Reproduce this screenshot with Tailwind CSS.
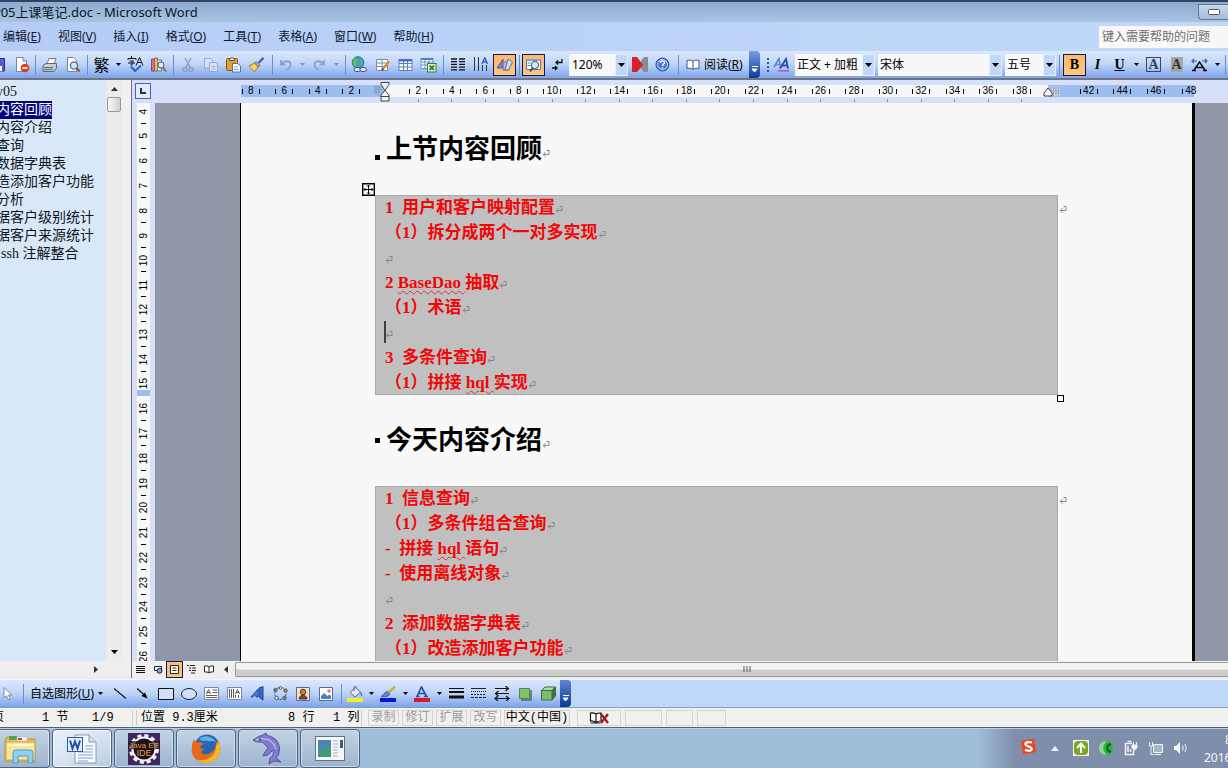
<!DOCTYPE html>
<html lang="zh-CN">
<head>
<meta charset="utf-8">
<title>day05上课笔记.doc - Microsoft Word</title>
<script src="https://cdn.jsdelivr.net/npm/@tailwindcss/browser@4"></script>
</head>
<body class="h-screen overflow-hidden flex flex-col bg-[#bfd8f7] text-black text-xs font-['Noto_Sans','Noto_Sans_CJK_SC',sans-serif]">

<svg width="0" height="0" class="absolute">
  <symbol id="down" viewBox="0 0 7 4"><path d="M0 0h7L3.500 4z" fill="currentColor"/></symbol>
  <symbol id="ret" viewBox="0 0 8 9"><path d="M4.500 1.500H7V5.500H1.500M3.500 3.200L1.200 5.500L3.500 7.800" fill="none" stroke="#858585"/></symbol>
</svg>

<!-- Title bar -->
<header class="h-[22px] shrink-0 flex items-center border-t-2 border-[#31435f] bg-linear-to-b from-[#8eabd0] to-[#a9c4e2] relative">
  <h1 class="-ml-[6px] flex-1 text-[13px] leading-5 whitespace-nowrap text-[#0b1526]">y05上课笔记.doc - Microsoft Word</h1>
  <button aria-label="最小化" class="w-[30px] h-4 border border-r-0 border-[#5d7897] rounded-bl bg-linear-to-b from-[#c9d9ea] to-[#a5bcd6] flex items-center justify-center">
    <svg width="12" height="6" viewBox="0 0 12 6"><rect x=".5" y=".5" width="11" height="5" rx="1" fill="#fff" stroke="#4a5667"/></svg>
  </button>
</header>

<!-- Menu bar -->
<nav class="h-[29px] shrink-0 flex items-center bg-linear-to-r from-[#b5ccf8] via-[#bcd3f8] to-[#c0d9f7] text-[#10182a]">
  <div class="flex flex-1 gap-[17px] pl-[3px] whitespace-nowrap">
    <button>编辑(<u>E</u>)</button><button>视图(<u>V</u>)</button><button>插入(<u>I</u>)</button><button>格式(<u>O</u>)</button><button>工具(<u>T</u>)</button><button>表格(<u>A</u>)</button><button>窗口(<u>W</u>)</button><button>帮助(<u>H</u>)</button>
  </div>
  <input aria-label="帮助" placeholder="键入需要帮助的问题" class="w-[129px] h-[22px] pl-[3px] bg-[#f8f8f8] placeholder:text-[#6f6f6f] outline-none">
</nav>

<!-- Standard and formatting toolbars -->
<div role="toolbar" class="h-[29px] shrink-0 flex items-center border-b-2 border-[#6d7486] bg-linear-to-b from-[#dbe8fc] via-[#bdd4f8] to-[#7ea3e8] overflow-hidden">
  <button aria-label="保存" class="w-[10px]"><svg width="6" height="16" viewBox="0 0 6 16"><path d="M0 1.500H4.500V14H0" fill="#5a5cc4" stroke="#30318c"/><path d="M0 9h2v5H0z" fill="#fff"/></svg></button>
  <button aria-label="权限" class="w-[23px] flex justify-center"><svg width="16" height="16" viewBox="0 0 16 16"><path d="M2.500.500H9L12.500 4V14.500H2.500z" fill="#fff" stroke="#7783a5"/><path d="M9 .5V4h3.500" fill="#ccd6ee" stroke="#7783a5"/><circle cx="11" cy="11" r="4.300" fill="#e03c1d"/><path d="M8.500 11h5" stroke="#fff" stroke-width="1.800"/></svg></button>
  <span class="w-[5px] flex justify-center"><i class="w-px h-5 bg-[#6a8ccb]"></i></span>
  <button aria-label="打印" class="w-[23px] flex justify-center"><svg width="16" height="16" viewBox="0 0 16 16"><path d="M5 7L7 1.500h7L12 7z" fill="#fff" stroke="#6d7a94"/><path d="M1 8.500L4 6.500H14.500V11L12 14.500H1z" fill="#c7cedb" stroke="#5c6780"/><path d="M2 10.500h9" stroke="#5c6780"/><path d="M2 12.500h9" stroke="#51a546" stroke-width="1.500"/></svg></button>
  <button aria-label="打印预览" class="w-[23px] flex justify-center"><svg width="16" height="16" viewBox="0 0 16 16"><path d="M2.500.500H8.500L11.500 3.500V14.500H2.500z" fill="#fff" stroke="#7783a5"/><circle cx="9" cy="8.500" r="3.600" fill="#cfe2f8" stroke="#5d6c88" stroke-width="1.300"/><path d="M11.500 11l3 3.500" stroke="#8a5a2b" stroke-width="2"/></svg></button>
  <span class="w-[7px] flex justify-center"><i class="w-px h-5 bg-[#6a8ccb]"></i></span>
  <button class="w-[21px] text-base leading-6">繁</button>
  <button aria-label="更多" class="w-3 flex justify-center"><svg width="5" height="3"><use href="#down"/></svg></button>
  <button aria-label="拼写和语法" class="w-[23px] flex justify-center"><svg width="17" height="17" viewBox="0 0 17 17"><path d="M4.500 0v2M1 4V2.500h8V4M2.500 5h4L5 6.500V9H3.500M1 7h7" fill="none" stroke="#111"/><path d="M9 9.500L12.500 1.500L16 9.500M10.500 6.500h4" fill="none" stroke="#111"/><path d="M4 10.500L8 15L14 9.500" fill="none" stroke="#2f66c4" stroke-width="2.200"/></svg></button>
  <button aria-label="信息检索" class="w-[23px] flex justify-center"><svg width="17" height="16" viewBox="0 0 17 16"><path d="M1.500 2h3v12h-3z" fill="#d46bb0" stroke="#7b4591"/><path d="M4.500 1h3v13h-3z" fill="#efc04f" stroke="#8b6b2d"/><path d="M7.500 3h4v11h-4z" fill="#d7dcea" stroke="#737f99"/><circle cx="11" cy="8" r="3" fill="#dcecff" stroke="#556"/><path d="M13 10.500l3 4" stroke="#a5622b" stroke-width="2"/></svg></button>
  <span class="w-[6px] flex justify-center"><i class="w-px h-5 bg-[#6a8ccb]"></i></span>
  <button aria-label="剪切" class="w-[23px] flex justify-center"><svg width="14" height="16" viewBox="0 0 14 16" fill="none" stroke="#8c9fc4" stroke-width="1.400"><path d="M4 1L9 10M10 1L5 10"/><circle cx="4" cy="12.500" r="2"/><circle cx="10" cy="12.500" r="2"/></svg></button>
  <button aria-label="复制" class="w-[23px] flex justify-center"><svg width="16" height="16" viewBox="0 0 16 16" fill="#d8e2f4" stroke="#97a8cc"><path d="M1.500 1.500h6l2 2V11h-8z"/><path d="M6.500 5.500h6l2 2V14.500h-8zM8.500 9.500h4M8.500 12h4"/></svg></button>
  <button aria-label="粘贴" class="w-[23px] flex justify-center"><svg width="17" height="16" viewBox="0 0 17 16"><rect x="1.500" y="1.500" width="11" height="12" rx="1" fill="#e2a12a" stroke="#7d5a1c"/><path d="M4.500 3.500v-2h1.500l1-1.300 1 1.300h1.500v2z" fill="#e8e8e8" stroke="#555"/><path d="M7.500 6.500h5l3 2.500v6h-8z" fill="#fff" stroke="#5372a8"/><path d="M9 10h4M9 12.500h5" stroke="#7fa0d8"/></svg></button>
  <button aria-label="格式刷" class="w-[23px] flex justify-center"><svg width="17" height="16" viewBox="0 0 17 16"><path d="M15.500 .8L10.500 6" stroke="#4d62b5" stroke-width="2.400"/><path d="M8 4.500L12 8.500L10 10L6.500 6z" fill="#a7aebc" stroke="#626b80"/><path d="M6.500 6L10 10L6.500 15L1 9z" fill="#f2d46f" stroke="#a17f29"/></svg></button>
  <span class="w-[8px] flex justify-center"><i class="w-px h-5 bg-[#6a8ccb]"></i></span>
  <button aria-label="撤消" class="w-5 flex justify-center"><svg width="14" height="14" viewBox="0 0 14 14" fill="none" stroke="#8ba1cd" stroke-width="1.800"><path d="M2 2v4.500h4.500M2.500 6C5 2.500 11.500 2 11.500 6.500c0 2.500-1.500 4-4 5.500"/></svg></button>
  <button aria-label="撤消列表" class="w-3 flex justify-center text-[#7f93bd]"><svg width="5" height="3"><use href="#down"/></svg></button>
  <button aria-label="恢复" class="w-[22px] flex justify-center"><svg width="14" height="14" viewBox="0 0 14 14" fill="none" stroke="#8ba1cd" stroke-width="1.800"><path d="M12 2v4.500H7.500M11.500 6C9 2.500 2.500 2 2.500 6.500c0 2.500 1.500 4 4 5.500"/></svg></button>
  <button aria-label="恢复列表" class="w-3 flex justify-center text-[#7f93bd]"><svg width="5" height="3"><use href="#down"/></svg></button>
  <span class="w-[6px] flex justify-center"><i class="w-px h-5 bg-[#6a8ccb]"></i></span>
  <button aria-label="超链接" class="w-[23px] flex justify-center"><svg width="17" height="17" viewBox="0 0 17 17"><circle cx="7" cy="6.500" r="5.800" fill="#3f9fd0" stroke="#2c6a8e"/><path d="M4 2c3 1 4 2 2 4s1 3-2 5C1 9 1 4 4 2zM9 3c3 1 3 5 1 6z" fill="#5cbf52"/><rect x="3" y="11.500" width="6.500" height="4" rx="2" fill="#dde4ee" stroke="#44536f"/><rect x="9" y="11.500" width="6.500" height="4" rx="2" fill="#dde4ee" stroke="#44536f"/></svg></button>
  <button aria-label="表格和边框" class="w-[23px] flex justify-center"><svg width="16" height="16" viewBox="0 0 16 16"><path d="M1.500 2.500h11v11h-11zM1.500 6h11M1.500 9.500h11M7 2.500v11" fill="#fff" stroke="#7b8cb0"/><path d="M14 4.500L7.500 12.500" stroke="#d9892e" stroke-width="2.400"/><path d="M7.500 11l-1.300 3 2.800-1.500z" fill="#333"/></svg></button>
  <button aria-label="插入表格" class="w-[23px] flex justify-center"><svg width="15" height="14" viewBox="0 0 15 14"><path d="M1 1.500h13v11H1zM1 5.500h13M1 9h13M5.500 3v10M9.500 3v10" fill="#fff" stroke="#5b7fc0"/><path d="M1 1h13v2.500H1z" fill="#4270c4"/></svg></button>
  <button aria-label="插入工作表" class="w-[23px] flex justify-center"><svg width="17" height="16" viewBox="0 0 17 16"><path d="M1 1.500h12v10H1zM1 5h12M1 8h12M5 3v9M9 3v9" fill="#fff" stroke="#6e8fc5"/><path d="M1 1h12v2H1z" fill="#4e7cc8"/><rect x="7.500" y="6.500" width="8.500" height="8.500" fill="#e9f5e4" stroke="#31852d"/><path d="M9.500 8.500l4.500 4.500M14 8.500L9.500 13" stroke="#2c8a28" stroke-width="1.800"/></svg></button>
  <span class="w-[6px] flex justify-center"><i class="w-px h-5 bg-[#6a8ccb]"></i></span>
  <button aria-label="分栏" class="w-[23px] flex justify-center"><svg width="14" height="13" viewBox="0 0 14 13" stroke="#111" stroke-width="1.300"><path d="M0 1h6M0 3.700h6M0 6.400h6M0 9.100h6M0 11.800h6M8 1h6M8 3.700h6M8 6.400h6M8 9.100h6M8 11.800h6"/></svg></button>
  <button aria-label="更改文字方向" class="w-[23px] flex justify-center"><svg width="16" height="15" viewBox="0 0 16 15" fill="none" stroke="#333"><path d="M1.500 0v14M5.500 0v14M9.500 8v6M13.500 8v6"/><path d="M9 7L11.800 .8L14.500 7M10 4.800h3.500" stroke="#2d55ae" stroke-width="1.300"/></svg></button>
  <button aria-label="绘图" class="ml-px w-[23px] h-[22px] shrink-0 border border-[#10185e] bg-linear-to-b from-[#fdb96a] to-[#fcc67c] flex items-center justify-center"><svg width="18" height="16" viewBox="0 0 18 16"><path d="M1 11L7 2V11z" fill="#8a7fc6" stroke="#5e56a0"/><path d="M7 5h6v8H7z" fill="#b8bbd6" stroke="#6e6fa0"/><path d="M12 2l4.500 3-4 8H9z" fill="#d7dcec" stroke="#5d6c98"/></svg></button>
  <span class="w-[6px] flex justify-center"><i class="w-px h-5 bg-[#6a8ccb]"></i></span>
  <button aria-label="文档结构图" class="w-[23px] h-[22px] shrink-0 border border-[#10185e] bg-linear-to-b from-[#fdb96a] to-[#fcc67c] flex items-center justify-center"><svg width="17" height="16" viewBox="0 0 17 16"><path d="M1.500 2.500h14v10h-14z" fill="#fff" stroke="#5579b8"/><path d="M1.500 2h14v2h-14z" fill="#7da3df"/><path d="M2.500 6h3M2.500 8.500h3" stroke="#5579b8"/><circle cx="10" cy="8" r="3.600" fill="#d5e8fb" stroke="#5d6c88" stroke-width="1.300"/><path d="M7.500 11L5 14.500" stroke="#444" stroke-width="1.800"/></svg></button>
  <button aria-label="显示/隐藏编辑标记" class="w-[23px] flex justify-center"><svg width="12" height="14" viewBox="0 0 12 14" fill="none" stroke="#111" stroke-width="1.300"><path d="M11 1v3.500H5M7 2.500L5 4.500l2 2M1 10h5M4 8l2 2-2 2"/></svg></button>
  <label class="ml-px w-[59px] h-[22px] bg-[#f8f8f8] flex shrink-0">
    <select aria-label="显示比例" class="appearance-none bg-transparent flex-1 min-w-0 pl-[3px] outline-none"><option>120%</option></select>
    <span class="w-[13px] bg-[#c1d7f9] border border-[#e6effc] flex items-center justify-center"><svg width="7" height="4"><use href="#down"/></svg></span>
  </label>
  <button aria-label="输入法" class="w-[23px] flex justify-center"><svg width="16" height="15" viewBox="0 0 16 15"><path d="M16 0v15h-4L6 8L12 0z" fill="#8a8c92"/><path d="M0 0h5l6 8l-6 7H0z" fill="#d8222a"/></svg></button>
  <button aria-label="帮助" class="w-[23px] flex justify-center"><svg width="15" height="15" viewBox="0 0 15 15"><circle cx="7.500" cy="7.500" r="6.500" fill="#3f78d8" stroke="#2851a3"/><circle cx="7.500" cy="7.500" r="5" fill="none" stroke="#cfe0fa"/><path d="M5.500 6c0-3 4-2.500 4-.3 0 1.300-2 1.500-2 3.300M7.500 10v1.500" fill="none" stroke="#fff" stroke-width="1.400"/></svg></button>
  <span class="w-[8px] flex justify-center"><i class="w-px h-5 bg-[#6a8ccb]"></i></span>
  <button class="w-[67px] shrink-0 flex items-center gap-1 pl-1 whitespace-nowrap"><svg width="14" height="12" viewBox="0 0 14 12" fill="#fff" stroke="#43516e"><path d="M7 2.500C5.500 1 3 1 1 1.500v8c2-.5 4.500-.5 6 1 1.500-1.500 4-1.500 6-1v-8C11 1 8.500 1 7 2.500zM7 2.500v8"/></svg><span>阅读(<u>R</u>)</span></button>
  <button aria-label="工具栏选项" class="w-[11px] h-[27px] shrink-0 rounded-r bg-linear-to-b from-[#7a9fe6] to-[#0c3a94] flex items-end justify-center pb-1 text-white"><svg width="7" height="8" viewBox="0 0 7 8"><path d="M1 .5h6M1 3h5L3.500 6z" fill="#fff" stroke="#fff"/></svg></button>

  <span class="ml-[5px] w-[5px] flex flex-col items-center gap-0.5"><i class="size-0.5 bg-[#3a5795]"></i><i class="size-0.5 bg-[#3a5795]"></i><i class="size-0.5 bg-[#3a5795]"></i><i class="size-0.5 bg-[#3a5795]"></i></span>
  <button aria-label="格式窗格" class="w-[23px] flex justify-center"><svg width="17" height="15" viewBox="0 0 17 15" fill="none"><path d="M1 10L6 1.500L7.500 10M3 7.500h4" stroke="#5f86cf" stroke-width="1.600"/><path d="M7 11.500L13 2L15 11.500M9.500 8.500h5" stroke="#2d4fa8" stroke-width="1.900"/><path d="M5 13.800h11" stroke="#c44ca4" stroke-width="1.500"/></svg></button>
  <label class="ml-[2px] w-20 h-[22px] bg-[#f8f8f8] flex shrink-0">
    <select aria-label="样式" class="appearance-none bg-transparent flex-1 min-w-0 pl-[2px] outline-none"><option>正文 + 加粗</option></select>
    <span class="w-[13px] bg-[#c1d7f9] border border-[#e6effc] flex items-center justify-center"><svg width="7" height="4"><use href="#down"/></svg></span>
  </label>
  <label class="ml-[3px] w-[124px] h-[22px] bg-[#f8f8f8] flex shrink-0">
    <select aria-label="字体" class="appearance-none bg-transparent flex-1 min-w-0 pl-[2px] outline-none"><option>宋体</option></select>
    <span class="w-[13px] bg-[#c1d7f9] border border-[#e6effc] flex items-center justify-center"><svg width="7" height="4"><use href="#down"/></svg></span>
  </label>
  <label class="ml-[3px] w-[51px] h-[22px] bg-[#f8f8f8] flex shrink-0">
    <select aria-label="字号" class="appearance-none bg-transparent flex-1 min-w-0 pl-[2px] outline-none"><option>五号</option></select>
    <span class="w-[13px] bg-[#c1d7f9] border border-[#e6effc] flex items-center justify-center"><svg width="7" height="4"><use href="#down"/></svg></span>
  </label>
  <span class="w-[7px] flex justify-center"><i class="w-px h-5 bg-[#6a8ccb]"></i></span>
  <button class="w-[23px] h-[22px] shrink-0 border border-[#10185e] bg-linear-to-b from-[#fdb96a] to-[#fcc67c] font-['Liberation_Serif',serif] font-bold text-sm leading-5">B</button>
  <button class="w-[23px] font-['Liberation_Serif',serif] font-bold italic text-sm">I</button>
  <button class="w-[21px] font-['Liberation_Serif',serif] font-bold text-sm underline">U</button>
  <button aria-label="下划线样式" class="w-3 flex justify-center"><svg width="5" height="3"><use href="#down"/></svg></button>
  <button class="w-[23px] flex justify-center"><span class="size-[15px] border border-[#39455f] font-['Liberation_Serif',serif] font-bold text-sm leading-[14px] text-[#333d52]">A</span></button>
  <button class="w-[23px] flex justify-center"><span class="w-3 h-[15px] bg-[#a3a5a9] font-['Liberation_Serif',serif] font-bold text-sm leading-4 text-[#333]">A</span></button>
  <button aria-label="字符缩放" class="w-[23px] flex justify-center"><svg width="17" height="14" viewBox="0 0 17 14" fill="none"><path d="M1 3h5M3 1L1 3l2 2M16 3h-5M14 1l2 2-2 2" stroke="#2f5fc0" stroke-width="1.200"/><path d="M1 12.500h4M12 12.500h4M3 12L8.500 4L14 12M5.500 9.500h6.500" stroke="#111" stroke-width="1.500"/></svg></button>
  <button aria-label="缩放比例" class="w-3 flex justify-center"><svg width="5" height="3"><use href="#down"/></svg></button>
  <span class="w-[5px] flex justify-center"><i class="w-px h-5 bg-[#6a8ccb]"></i></span>
</div>

<!-- Work area -->
<main class="flex-1 min-h-0 flex border-b border-[#e8ecf4]">
  <!-- Document map -->
  <aside class="w-[131px] shrink-0 flex flex-col bg-[#f0f0f0]">
    <div class="flex-1 min-h-0 flex">
      <ul class="w-[106px] bg-[#d9e8f8] overflow-hidden pt-[3px] text-sm leading-[18px] whitespace-nowrap font-['Liberation_Serif','Noto_Sans_CJK_SC',serif] text-[#101522]">
        <li class="-ml-1">y05</li>
        <li class="-ml-1"><span class="bg-[#04047c] text-white inline-block h-[18px]">内容回顾</span></li>
        <li class="-ml-1">内容介绍</li>
        <li class="-ml-1">查询</li>
        <li class="-ml-1">数据字典表</li>
        <li class="-ml-1">造添加客户功能</li>
        <li class="-ml-1">分析</li>
        <li class="-ml-1">据客户级别统计</li>
        <li class="-ml-1">据客户来源统计</li>
        <li class="pl-px">ssh 注解整合</li>
      </ul>
      <div class="w-4 bg-[#ececec] flex flex-col items-center py-[7px]">
        <svg width="7" height="4" viewBox="0 0 7 4"><path d="M3.500 0L7 4H0z" fill="#333"/></svg>
        <i class="mt-[6px] w-[14px] h-[15px] border border-[#989898] rounded-xs bg-linear-to-r from-[#fafafa] to-[#cfcfcf]"></i>
        <svg class="mt-auto" width="7" height="4"><use href="#down"/></svg>
      </div>
    </div>
    <div class="h-[17px] bg-[#eeeeee] flex items-center pl-[94px]"><svg width="4" height="7" viewBox="0 0 4 7"><path d="M0 0L4 3.500L0 7z" fill="#333"/></svg></div>
  </aside>

  <section class="flex-1 min-w-0 flex flex-col border-l border-[#6c6f78]">
    <!-- Horizontal ruler -->
    <div class="h-[23px] shrink-0 bg-[#d7e0f8] flex overflow-hidden">
      <button aria-label="制表符" class="mt-[3px] ml-[3px] size-4 shrink-0 border border-[#3f68b0] bg-[#e3ebfa] flex items-center justify-center"><svg width="6" height="6" viewBox="0 0 6 6"><path d="M1 0v5h5" fill="none" stroke="#333" stroke-width="2"/></svg></button>
      <div class="relative ml-[90px] flex-1 min-w-0 h-full">
        <div class="mt-[5px] h-3 flex">
          <i class="w-[144px] bg-[#9dbcf0]"></i><i class="w-[663px] bg-[#f8f8f8]"></i><i class="w-[146px] bg-[#9dbcf0]"></i>
        </div>
        <div id="hruler" class="absolute top-[5px] -left-[7px] w-[972px] grid grid-flow-col auto-cols-fr h-[18px] text-[10px] leading-3 font-['Liberation_Sans',sans-serif]"></div>
        <svg class="absolute left-[133px] top-[2px]" width="18" height="20" viewBox="0 0 18 20"><path d="M1 4v9M3 4v9M5 4v9M0 5h8M0 7.500h8M0 10h8" stroke="#8392ad" stroke-width=".6"/><path d="M7 .5h8v2L11 8.500L7 2.500zM7 15V13l4-4.500L15 13v2M7 14.500h8v4.500H7z" fill="#f4f4f4" stroke="#444"/></svg>
        <svg class="absolute left-[802px] top-[4px]" width="18" height="14" viewBox="0 0 18 14"><path d="M9 2h8v10H9z" fill="#d5dbe6"/><path d="M10.500 2v10M13 2v10M15.500 2v10M9 4h8M9 6.500h8M9 9h8" stroke="#8a96ab" stroke-width=".7"/><path d="M1 12V9l4-5l4 5v3z" fill="#f4f4f4" stroke="#444"/></svg>
      </div>
    </div>
    <div class="flex-1 min-h-0 flex bg-[#9097a8] overflow-hidden">
      <!-- Vertical ruler -->
      <div class="w-[23px] shrink-0 pl-[5px] pr-[5px] bg-[#d7e0f8] relative overflow-hidden">
        <div id="vruler" class="-mt-1 h-[570px] grid auto-rows-fr bg-[#f8f8f8] text-[10px] leading-3 font-['Liberation_Sans',sans-serif]"></div>
        <i class="absolute left-[5px] top-[287px] w-[13px] h-[6px] bg-[#9dbcf0]"></i>
      </div>
      <!-- Page -->
      <article class="ml-[85px] mr-[33px] flex-1 border-l border-r-3 border-black bg-[#f8f8f8] px-[134px] pt-[29px] text-[17px] leading-[25px] font-bold text-[#f00808] font-['Liberation_Serif','Noto_Sans_CJK_SC',serif]">
        <h2 class="h-[35px] mb-7 flex items-center text-[26px] text-black"><i class="size-[5px] bg-black mt-4 mr-[6px]"></i>上节内容回顾<svg class="mt-2" width="8" height="9"><use href="#ret"/></svg></h2>
        <div class="relative">
          <svg class="absolute -left-[13px] -top-[12px]" width="13" height="13" viewBox="0 0 13 13"><path d="M.7.700h11.600v11.600H.7z" fill="#fff" stroke="#000" stroke-width="1.400"/><path d="M6.500 2v9M2 6.500h9M5 3.500L6.500 2L8 3.500M5 9.500L6.500 11L8 9.500M3.500 5L2 6.500L3.500 8M9.500 5L11 6.500L9.500 8" fill="none" stroke="#000"/></svg>
          <table class="w-full bg-[#c0c0c0] outline outline-[#a9a9a9] -outline-offset-1">
            <tbody><tr><td class="pl-[10px] whitespace-pre"><p>1  用户和客户映射配置<svg class="inline" width="8" height="9"><use href="#ret"/></svg></p><p>（1）拆分成两个一对多实现<svg class="inline" width="8" height="9"><use href="#ret"/></svg></p><p><svg class="inline" width="8" height="9"><use href="#ret"/></svg></p><p>2 <span class="underline decoration-wavy decoration-1 decoration-[#e03030] underline-offset-2">BaseDao </span>抽取<svg class="inline" width="8" height="9"><use href="#ret"/></svg></p><p>（1）术语<svg class="inline" width="8" height="9"><use href="#ret"/></svg></p><p class="relative"><i class="absolute -left-px top-px w-0.5 h-[22px] bg-[#404040]"></i><svg class="inline" width="8" height="9"><use href="#ret"/></svg></p><p>3  多条件查询<svg class="inline" width="8" height="9"><use href="#ret"/></svg></p><p>（1）拼接 <span class="underline decoration-wavy decoration-1 decoration-[#e03030] underline-offset-2">hql </span>实现<svg class="inline" width="8" height="9"><use href="#ret"/></svg></p></td></tr></tbody>
          </table>
          <svg class="absolute -right-[9px] top-[10px]" width="8" height="9"><use href="#ret"/></svg>
          <i class="absolute -right-[6px] -bottom-[7px] size-[7px] border border-black bg-white"></i>
        </div>
        <h2 class="h-[35px] my-7 flex items-center text-[26px] text-black"><i class="size-[5px] bg-black mr-[6px]"></i>今天内容介绍<svg class="mt-2" width="8" height="9"><use href="#ret"/></svg></h2>
        <div class="relative">
          <table class="w-full bg-[#c0c0c0] outline outline-[#a9a9a9] -outline-offset-1">
            <tbody><tr><td class="pl-[10px] whitespace-pre"><p>1  信息查询<svg class="inline" width="8" height="9"><use href="#ret"/></svg></p><p>（1）多条件组合查询<svg class="inline" width="8" height="9"><use href="#ret"/></svg></p><p>-  拼接 <span class="underline decoration-wavy decoration-1 decoration-[#e03030] underline-offset-2">hql </span>语句<svg class="inline" width="8" height="9"><use href="#ret"/></svg></p><p>-  使用离线对象<svg class="inline" width="8" height="9"><use href="#ret"/></svg></p><p><svg class="inline" width="8" height="9"><use href="#ret"/></svg></p><p>2  添加数据字典表<svg class="inline" width="8" height="9"><use href="#ret"/></svg></p><p>（1）改造添加客户功能<svg class="inline" width="8" height="9"><use href="#ret"/></svg></p><p> </p></td></tr></tbody>
          </table>
          <svg class="absolute -right-[9px] top-[10px]" width="8" height="9"><use href="#ret"/></svg>
        </div>
      </article>
    </div>
    <!-- View buttons and horizontal scroll bar -->
    <div class="h-[17px] shrink-0 flex items-center bg-[#efefef]">
      <button aria-label="普通视图" class="w-[17px] flex justify-center"><svg width="9" height="9" viewBox="0 0 9 9" stroke="#111"><path d="M0 1.500h9M0 3.500h9M0 5.500h9M0 7.500h9"/></svg></button>
      <button aria-label="Web 版式视图" class="w-[17px] flex justify-center"><svg width="10" height="9" viewBox="0 0 10 9"><path d="M1.500 1.500h7v4h-7z" fill="#fff" stroke="#222"/><circle cx="6.500" cy="5.800" r="2.500" fill="#7fa8d4" stroke="#222"/></svg></button>
      <button aria-label="页面视图" class="w-[17px] h-[17px] border border-[#10185e] bg-[#fcbf70] flex items-center justify-center"><svg width="9" height="9" viewBox="0 0 9 9"><path d="M.5.500h8v8h-8zM2.500 3h4M2.500 5.500h4" fill="#fff" stroke="#222"/></svg></button>
      <button aria-label="大纲视图" class="w-[17px] flex justify-center"><svg width="9" height="9" viewBox="0 0 9 9" stroke="#222"><path d="M0 .5h2M3 .5h5M2 3h2M5 3h4M2 5.500h2M5 5.500h4M4 8h4"/></svg></button>
      <button aria-label="阅读版式" class="w-[17px] flex justify-center"><svg width="10" height="9" viewBox="0 0 10 9" fill="#fff" stroke="#222"><path d="M5 2C4 .8 2 .8.500 1v6C2 6.800 4 7 5 8c1-1 3-1.200 4.500-1V1C8 .8 6 .8 5 2zM5 2v6"/></svg></button>
      <span class="w-[18px] flex justify-center"><svg width="4" height="7" viewBox="0 0 4 7"><path d="M4 0L0 3.500L4 7z" fill="#333"/></svg></span>
      <div class="flex-1 h-[15px] border border-r-0 border-[#999] rounded-l-xs bg-linear-to-b from-[#f3f3f3] from-45% to-[#cdcdcd] to-55% flex items-center justify-center pl-[30px]"><svg width="8" height="7" viewBox="0 0 8 7" stroke="#555"><path d="M1 0v6M4 0v6M7 0v6"/></svg></div>
    </div>
  </section>
</main>

<!-- Drawing toolbar -->
<div role="toolbar" class="h-[29px] shrink-0 flex border-t border-[#f4f6fa] border-b border-b-[#7f9fce] bg-[#bfd8f7]">
  <div class="flex items-center h-[27px] rounded-r bg-linear-to-b from-[#dbe8fc] via-[#bdd4f8] to-[#7ea3e8]">
    <button aria-label="选择对象" class="w-4 flex justify-center"><svg width="10" height="14" viewBox="0 0 10 14"><path d="M1 .5V11l2.500-2.300L5.500 13l1.800-.8L5.500 8H9z" fill="#fff" stroke="#7d8aa5"/></svg></button>
    <span class="w-[14px] flex justify-center"><i class="w-px h-5 bg-[#6a8ccb]"></i></span>
    <button class="w-[79px] flex items-center whitespace-nowrap"><span>自选图形(<u>U</u>)</span><svg class="ml-1" width="5" height="3"><use href="#down"/></svg></button>
    <button aria-label="直线" class="w-[21px] flex justify-center"><svg width="12" height="11" viewBox="0 0 12 11"><path d="M0 .5L12 10.500" stroke="#111" stroke-width="1.200"/></svg></button>
    <button aria-label="箭头" class="w-6 flex justify-center"><svg width="11" height="11" viewBox="0 0 11 11"><path d="M0 .5L8 7.500" stroke="#111" stroke-width="1.200"/><path d="M10.500 10.500L4.500 8L8 4.500z"/></svg></button>
    <button aria-label="矩形" class="w-[23px] flex justify-center"><svg width="16" height="12" viewBox="0 0 16 12"><path d="M.5.500h15v11H.5z" fill="#cfe0fa" stroke="#111"/></svg></button>
    <button aria-label="椭圆" class="w-[23px] flex justify-center"><svg width="16" height="12" viewBox="0 0 16 12"><ellipse cx="8" cy="6" rx="7.500" ry="5.500" fill="#cfe0fa" stroke="#222"/></svg></button>
    <button aria-label="文本框" class="w-[23px] flex justify-center"><svg width="15" height="13" viewBox="0 0 15 13"><path d="M.5.500h14v12H.5z" fill="#fff" stroke="#7a88a5"/><path d="M2.500 7L4.500 2.500L6.500 7M3 5.500h3M8.500 3h5M8.500 5.500h5M2 8.500h11M2 10.500h11" fill="none" stroke="#333" stroke-width=".8"/></svg></button>
    <button aria-label="竖排文本框" class="w-[23px] flex justify-center"><svg width="15" height="13" viewBox="0 0 15 13"><path d="M.5.500h14v12H.5z" fill="#fff" stroke="#7a88a5"/><path d="M2.500 2v9M4.500 2v9M6.500 2v9M8.500 8v3M11.500 8v3M8.500 7L10.500 2.500L12.500 7M9 5.500h3" fill="none" stroke="#333" stroke-width=".8"/></svg></button>
    <button aria-label="艺术字" class="w-[23px] flex justify-center"><svg width="16" height="15" viewBox="0 0 16 15"><path d="M1 11L8 3v8H6V9H4l-1 2z" fill="#4f83dc" stroke="#2851a3"/><path d="M9 2l4-1.500V14l-4-3z" fill="#3b6bc8" stroke="#1f4391"/></svg></button>
    <button aria-label="组织结构图" class="w-[22px] flex justify-center"><svg width="15" height="15" viewBox="0 0 15 15" fill="#eef" stroke="#555"><path d="M4 2.500A6 6 0 0 1 11 2.500M12.800 5a6 6 0 0 1-1 6M9 13.300a6 6 0 0 1-4 0M2.500 10.500a6 6 0 0 1-.3-5" fill="none" stroke-dasharray="2 1"/><circle cx="7.500" cy="2" r="1.400"/><circle cx="2.500" cy="4" r="1.700" fill="#5b87d0"/><circle cx="12.500" cy="4.500" r="1.700" fill="#d46a4a"/><circle cx="3.500" cy="12" r="1.700"/><circle cx="11.500" cy="12" r="1.700" fill="#5b87d0"/></svg></button>
    <button aria-label="剪贴画" class="w-6 flex justify-center"><svg width="14" height="14" viewBox="0 0 14 14"><path d="M.5.500h13v13H.5z" fill="#f4e3c8" stroke="#5e6b88"/><circle cx="7" cy="5" r="2.800" fill="#c77f42" stroke="#6b3516"/><path d="M3 12c0-5 8-5 8 0z" fill="#7a4a2b" stroke="#53301a"/></svg></button>
    <button aria-label="插入图片" class="w-[22px] flex justify-center"><svg width="14" height="14" viewBox="0 0 14 14"><path d="M.5.500h13v13H.5z" fill="#fff" stroke="#5e6b88"/><path d="M2 12V9l3-3 3.500 3 2-1.500L12 9v3z" fill="#4f7ec8"/><circle cx="10" cy="4" r="1.800" fill="#e6873a"/></svg></button>
    <span class="w-2 flex justify-center"><i class="w-px h-5 bg-[#6a8ccb]"></i></span>
    <button aria-label="填充颜色" class="w-[20px] flex justify-center"><svg width="17" height="16" viewBox="0 0 17 16"><path d="M3 6.500L8.500 1.500L13.500 6L8 11z" fill="#e4eaf5" stroke="#5b6b8c"/><path d="M7 5V1.500c0-1.500 2.500-1.500 2.500 0" fill="none" stroke="#5b6b8c"/><path d="M13 6c3 1 2.500 3 2 4.500-1.500-1-1.500-2.500-2-4.500z" fill="#3f74cc"/><path d="M0 12h16v4H0z" fill="#f4ee1f"/></svg></button>
    <button aria-label="填充颜色列表" class="w-3 flex justify-center"><svg width="5" height="3"><use href="#down"/></svg></button>
    <button aria-label="线条颜色" class="w-[22px] flex justify-center"><svg width="17" height="16" viewBox="0 0 17 16"><path d="M1 10.500C4 10 4 6 7 5.500l3 2.500C8 11 4 11 1 10.500z" fill="#5b87d4" stroke="#385a9b"/><path d="M8.500 6.500L15 .8" stroke="#d6a53a" stroke-width="2.500"/><path d="M0 12h16v4H0z" fill="#0b12e0"/></svg></button>
    <button aria-label="线条颜色列表" class="w-3 flex justify-center"><svg width="5" height="3"><use href="#down"/></svg></button>
    <button aria-label="字体颜色" class="w-[22px] flex justify-center"><svg width="16" height="16" viewBox="0 0 16 16"><path d="M3 10.500L7.500 1L12.500 10.500M5 7.500h6M2 10.500h3.500M10 10.500h4" fill="none" stroke="#28509e" stroke-width="1.700"/><path d="M0 12h16v4H0z" fill="#e21326"/></svg></button>
    <button aria-label="字体颜色列表" class="w-3 flex justify-center"><svg width="5" height="3"><use href="#down"/></svg></button>
    <button aria-label="线型" class="w-[22px] flex justify-center"><svg width="15" height="11" viewBox="0 0 15 11" stroke="#111"><path d="M0 .5h15"/><path d="M0 4h15" stroke-width="2"/><path d="M0 9h15" stroke-width="3"/></svg></button>
    <button aria-label="虚线线型" class="w-[23px] flex justify-center"><svg width="15" height="11" viewBox="0 0 15 11" stroke="#222"><path d="M0 .5h15"/><path d="M0 3.500h15" stroke-dasharray="1 1"/><path d="M0 6.500h15" stroke-dasharray="2 1"/><path d="M0 9.500h15" stroke-dasharray="3 1"/></svg></button>
    <button aria-label="箭头样式" class="w-[23px] flex justify-center"><svg width="16" height="15" viewBox="0 0 16 15" fill="none" stroke="#111" stroke-width="1.200"><path d="M1 2.500h13M11.500 0L14.500 2.500l-3 2.500M2 7.500h13M4.500 5L1.500 7.500l3 2.500M1 12.500h14M12 10l3 2.500L12 15M4 10L1 12.500L4 15"/></svg></button>
    <button aria-label="阴影样式" class="w-[23px] flex justify-center"><svg width="14" height="14" viewBox="0 0 14 14"><path d="M3 3h11v11H3z" fill="#6b7c92"/><path d="M1.500 1.500h10v10h-10z" fill="#7cc36b" stroke="#4a8d45"/></svg></button>
    <button aria-label="三维效果样式" class="w-6 flex justify-center"><svg width="15" height="15" viewBox="0 0 15 15" stroke="#3a6e38"><path d="M.5 4.500L4 1h10.500L11 4.500z" fill="#b4dba6"/><path d="M11 4.500L14.500 1v9L11 14z" fill="#3f7a3c"/><path d="M.5 4.500H11V14H.5z" fill="#7cbd6d"/></svg></button>
    <button aria-label="工具栏选项" class="w-[11px] h-full rounded-r bg-linear-to-b from-[#5c85d4] to-[#0c3a94] flex items-end justify-center pb-1"><svg width="7" height="8" viewBox="0 0 7 8"><path d="M1 .5h6M1 3h5L3.500 6z" fill="#fff" stroke="#fff"/></svg></button>
  </div>
</div>

<!-- Status bar -->
<footer class="h-5 shrink-0 flex items-center bg-[#f0f0ee] border-b border-[#51617a] text-xs whitespace-nowrap font-['Liberation_Mono','Noto_Sans_CJK_SC',monospace] gap-[3px] overflow-hidden">
  <div class="w-[133px] shrink-0 flex h-4 leading-4 border-r border-[#cfcfcf]"><span class="w-[42px] flex"><span class="-ml-2">页</span></span><span class="w-[50px]">1 节</span><span>1/9</span></div>
  <div class="w-[226px] flex h-4 leading-4 border-x border-[#cfcfcf] pl-[4px]"><span class="w-[147px]">位置 9.3厘米</span><span class="w-[45px]">8 行</span><span>1 列</span></div>
  <span class="w-[31px] ml-[3px] h-4 leading-[14px] border border-[#d4d4d2] text-center text-[#9c9c9c]">录制</span>
  <span class="w-[31px] h-4 leading-[14px] border border-[#d4d4d2] text-center text-[#9c9c9c]">修订</span>
  <span class="w-[31px] h-4 leading-[14px] border border-[#d4d4d2] text-center text-[#9c9c9c]">扩展</span>
  <span class="w-[31px] h-4 leading-[14px] border border-[#d4d4d2] text-center text-[#9c9c9c]">改写</span>
  <span class="w-[66px] h-4 leading-[14px] border border-[#d4d4d2] text-center">中文(中国)</span>
  <span class="w-[44px] ml-1 h-4 border border-[#d4d4d2] flex items-center justify-center"><svg width="20" height="12" viewBox="0 0 20 12"><path d="M7 2C5 .8 3 .8 1.500 1v8C3 8.800 5 9 7 10.500c1-1 3-1.500 5-1.500V1c-2 0-4 0-5 1zM7 2v8M1.500 11h10" fill="#fff" stroke="#111" stroke-width="1.200"/><path d="M12 2l7 9M19 2l-7 9" stroke="#a01b1b" stroke-width="2.200"/></svg></span>
  <span class="w-[37px] ml-px h-4 border border-[#d4d4d2]"></span>
  <span class="w-[27px] ml-px h-4 border border-[#d4d4d2]"></span>
  <span class="w-[29px] ml-px h-4 border border-[#d4d4d2]"></span>
</footer>

<!-- Windows taskbar -->
<div class="h-10 shrink-0 flex bg-[#9fbed9] border-t border-[#bcd0e3]">
  <div class="flex flex-1 gap-0.5">
    <button aria-label="资源管理器" class="w-[50px] border border-l-0 border-[#4c617e] rounded-r-sm bg-linear-to-b from-[#c4d3e4] to-[#9db4ce] shadow-[inset_-1px_1px_0_#dbe6f1] flex items-center pl-1"><svg width="34" height="32" viewBox="0 0 34 32"><path d="M1 7l2-3h9l2 2h17v22H1z" fill="#e5c25e" stroke="#b8923a"/><path d="M5 3h8v4H5z" fill="#4ea64a"/><path d="M13 4h10v4H13z" fill="#fff" stroke="#bbb" stroke-width=".6"/><path d="M14 5h4v2h-4z" fill="#d0393a"/><path d="M2 9h29v18H2z" fill="#f7e39a" stroke="#cfa94a"/><path d="M3 12h27" stroke="#fff5cb" stroke-width="2"/><path d="M9 30V20q0-3 3-3h14q3 0 3 3v10h-5v-7H14v7z" fill="#8fd0f0" stroke="#4a9ccc"/></svg></button>
    <button aria-label="Word" class="w-[60px] border border-[#4c617e] rounded-sm bg-linear-to-br from-[#eaf1f8] via-[#d7e4f1] to-[#b7cbe0] shadow-[inset_0_0_0_1px_#f3f8fc] flex items-center justify-center"><svg width="32" height="32" viewBox="0 0 32 32"><path d="M9 2h14l7 7v21H9z" fill="#fafcff" stroke="#8797b4"/><path d="M23 2v7h7" fill="#cfdbee" stroke="#8797b4"/><path d="M19 13h8M19 16h8M12 19h15M12 22h15M12 25h15M12 28h10" stroke="#7d9fd6"/><rect x="1.500" y="4.500" width="15" height="14" fill="#e5eefc" stroke="#2f58a8"/><path d="M4 7.500l2.500 8L9 8.500l2.500 7 2.500-8" fill="none" stroke="#2450a4" stroke-width="2"/></svg></button>
    <button aria-label="Java EE IDE" class="w-[60px] border border-[#4c617e] rounded-sm bg-linear-to-b from-[#c4d3e4] to-[#9db4ce] shadow-[inset_0_0_0_1px_#cfdcea] flex items-center justify-center"><svg width="32" height="32" viewBox="0 0 32 32" class="font-['Liberation_Sans',sans-serif]"><rect width="32" height="32" fill="#41265c"/><circle cx="16" cy="16" r="13" fill="none" stroke="#eee" stroke-width="4" stroke-dasharray="4 2.800"/><circle cx="16" cy="16" r="11.500" fill="#191325" stroke="#eee" stroke-width="2"/><path d="M0 8h32v8H0z" fill="#191325" fill-opacity=".7"/><text x="16" y="15" font-size="8" text-anchor="middle" fill="#f29a2e">Java EE</text><text x="16" y="23" font-size="9" text-anchor="middle" fill="#f29a2e">IDE</text></svg></button>
    <button aria-label="Firefox" class="w-[60px] border border-[#4c617e] rounded-sm bg-linear-to-b from-[#c4d3e4] to-[#9db4ce] shadow-[inset_0_0_0_1px_#cfdcea] flex items-center justify-center"><svg width="32" height="32" viewBox="0 0 32 32"><circle cx="17" cy="14" r="12.500" fill="#2766b4"/><path d="M9 6c5-5 14-3 17 3-4-2-6 0-8-1s-5 1-9-2z" fill="#5cb3e8"/><path d="M29 9c4 9-1 21-13 21C6 30 0 22 2 13c0-3 1-5 2.500-7 .3 2 1 3 2.500 3.500 2-.7 5-.5 7 1.500-3 1-4 2-4 4 1.500 0 3 .5 4 2-2 .3-3 1-3 2.500 3 3 8 2 10.500-.5 4-2.500 5-6 4-10z" fill="#e66a19"/><path d="M29 9c4 9-1 21-13 21-4 0-7-1-9.500-3.500C16 29 26 24 26 13c1-1.500 1.500-2.500 3-4z" fill="#f6b62b"/></svg></button>
    <button aria-label="MySQL" class="w-[60px] border border-[#4c617e] rounded-sm bg-linear-to-b from-[#c4d3e4] to-[#9db4ce] shadow-[inset_0_0_0_1px_#cfdcea] flex items-center justify-center"><svg width="32" height="32" viewBox="0 0 32 32"><path d="M1 7C5 5 6 3 10 2.500L14 0l1 2.500C24 4 29 11 27 19c0 3-1 4-3 6l5 4-7-1-5 3 1-6c3-2 4-5 3-8l-5 5-5 1 2-4 3-4C13 12 12 9 8 9 5 9 3 9 1 7z" fill="#7f7dcb" stroke="#5553a0"/><path d="M4 7c8-3 17-1 20 9" fill="none" stroke="#b8b6ea" stroke-width="1.500"/><circle cx="8" cy="6.500" r=".9" fill="#2c2a5e"/></svg></button>
    <button aria-label="应用程序" class="w-[60px] border border-[#4c617e] rounded-sm bg-linear-to-b from-[#c4d3e4] to-[#9db4ce] shadow-[inset_0_0_0_1px_#cfdcea] flex items-center justify-center"><svg width="30" height="26" viewBox="0 0 30 26"><rect x=".5" y=".5" width="29" height="24" fill="#f5f8fb" stroke="#5f7387"/><rect x="3" y="4" width="13" height="17" fill="#3f9a7c"/><path d="M3 4h13v6L3 16z" fill="#4a86b5"/><path d="M18 5h5M18 8h5M18 11h5M18 14h5M18 17h5M18 20h5" stroke="#a7b2bf"/><path d="M25 4h3v8h-3z" fill="#3d5a78"/></svg></button>
  </div>
  <div class="w-[250px] shrink-0 flex items-center bg-linear-to-r from-[#9fbed9] to-[#7f8eab] to-15% text-[#f3f6fa]">
    <div class="flex items-center pl-[42px] pb-px gap-[9px]">
      <svg class="-mt-1" width="17" height="17" viewBox="0 0 17 17"><path d="M1 3L14 .5L16 14L3 16.500z" fill="#ea4a1b"/><path d="M12 4.500C8 3.500 5 4.500 5.500 6.500S12 8.500 11.800 11 7 13 5 11.800" fill="none" stroke="#fff" stroke-width="2.200"/></svg>
      <svg class="mx-[5px]" width="8" height="5" viewBox="0 0 8 5"><path d="M4 0l4 5H0z" fill="#eaf1f8"/></svg>
      <svg width="16" height="16" viewBox="0 0 16 16"><path d="M0 0h16v16H0z" fill="#f4f6ee"/><rect x="1" y="1" width="14" height="14" rx="4" fill="#7ba428"/><path d="M8 13V4M4 8l4-4.500L12 8" fill="none" stroke="#fff" stroke-width="2"/></svg>
      <svg width="16" height="16" viewBox="0 0 16 16"><circle cx="8" cy="8" r="7" fill="#2cb33e"/><path d="M9 1.500C4 4 4 12 9 14.500L6 15C-1 12-1 4 6 1z" fill="#8fd69a"/><path d="M13 4C8 5 8 11 13 12" fill="none" stroke="#0b5e1b" stroke-width="2"/></svg>
      <svg width="16" height="16" viewBox="0 0 16 16" fill="none" stroke="#f2f4f7"><path d="M9 3.500H2.500v11h8V10" stroke-width="1.500"/><path d="M4.500 1.500h4M5 6v6M7.500 9v3" stroke-width="1.500"/><path d="M9 5h5v3l-2.500 2L9 8zM10.500 2v3M13.500 2v3" fill="#f2f4f7"/></svg>
      <svg width="16" height="16" viewBox="0 0 16 16" stroke="#f2f4f7"><path d="M5.500 4.500h9v8h-9z" fill="#a9b5c9"/><path d="M7 14.500h6M1.500 2v4h3V2M3 6v8.500h3" fill="none"/></svg>
      <svg width="16" height="14" viewBox="0 0 16 14"><path d="M1 5h2l4-4v12L3 9H1z" fill="#f2f4f7"/><path d="M9.500 4.500q1.500 2.500 0 5M12 3q2.500 4 0 8" fill="none" stroke="#f2f4f7"/></svg>
    </div>
    <div class="ml-auto w-6 leading-[18px] text-xs overflow-hidden whitespace-nowrap"><p class="pl-[21px]">8:</p><p>2016/</p></div>
  </div>
</div>

<script>
  const h = document.getElementById('hruler');
  for (let n = -8; n <= 48; n += 2) {
    const edge = n === 0 || n === 40;
    const hidden = edge ? 'invisible' : '';
    const minor = n > 0 && n < 40 ? '<i class="w-px h-[3px] bg-[#8b95ad]"></i>' : '';
    h.insertAdjacentHTML('beforeend',
      `<div class="flex flex-col items-center gap-[2px] ${hidden}"><div class="h-3 flex items-center justify-center gap-[2px]"><i class="w-px h-[5px] bg-black"></i><span class="w-3 text-center">${Math.abs(n)}</span>${n === 48 ? '' : '<i class="w-px h-[5px] bg-black"></i>'}</div>${minor}</div>`);
  }
  const v = document.getElementById('vruler');
  for (let n = 4; n <= 26; n++) {
    v.insertAdjacentHTML('beforeend',
      `<div class="relative flex items-center justify-center"><span class="[writing-mode:vertical-rl] rotate-180">${n}</span><i class="absolute bottom-0 left-1 w-[5px] h-px bg-black"></i></div>`);
  }
</script>
</body>
</html>
